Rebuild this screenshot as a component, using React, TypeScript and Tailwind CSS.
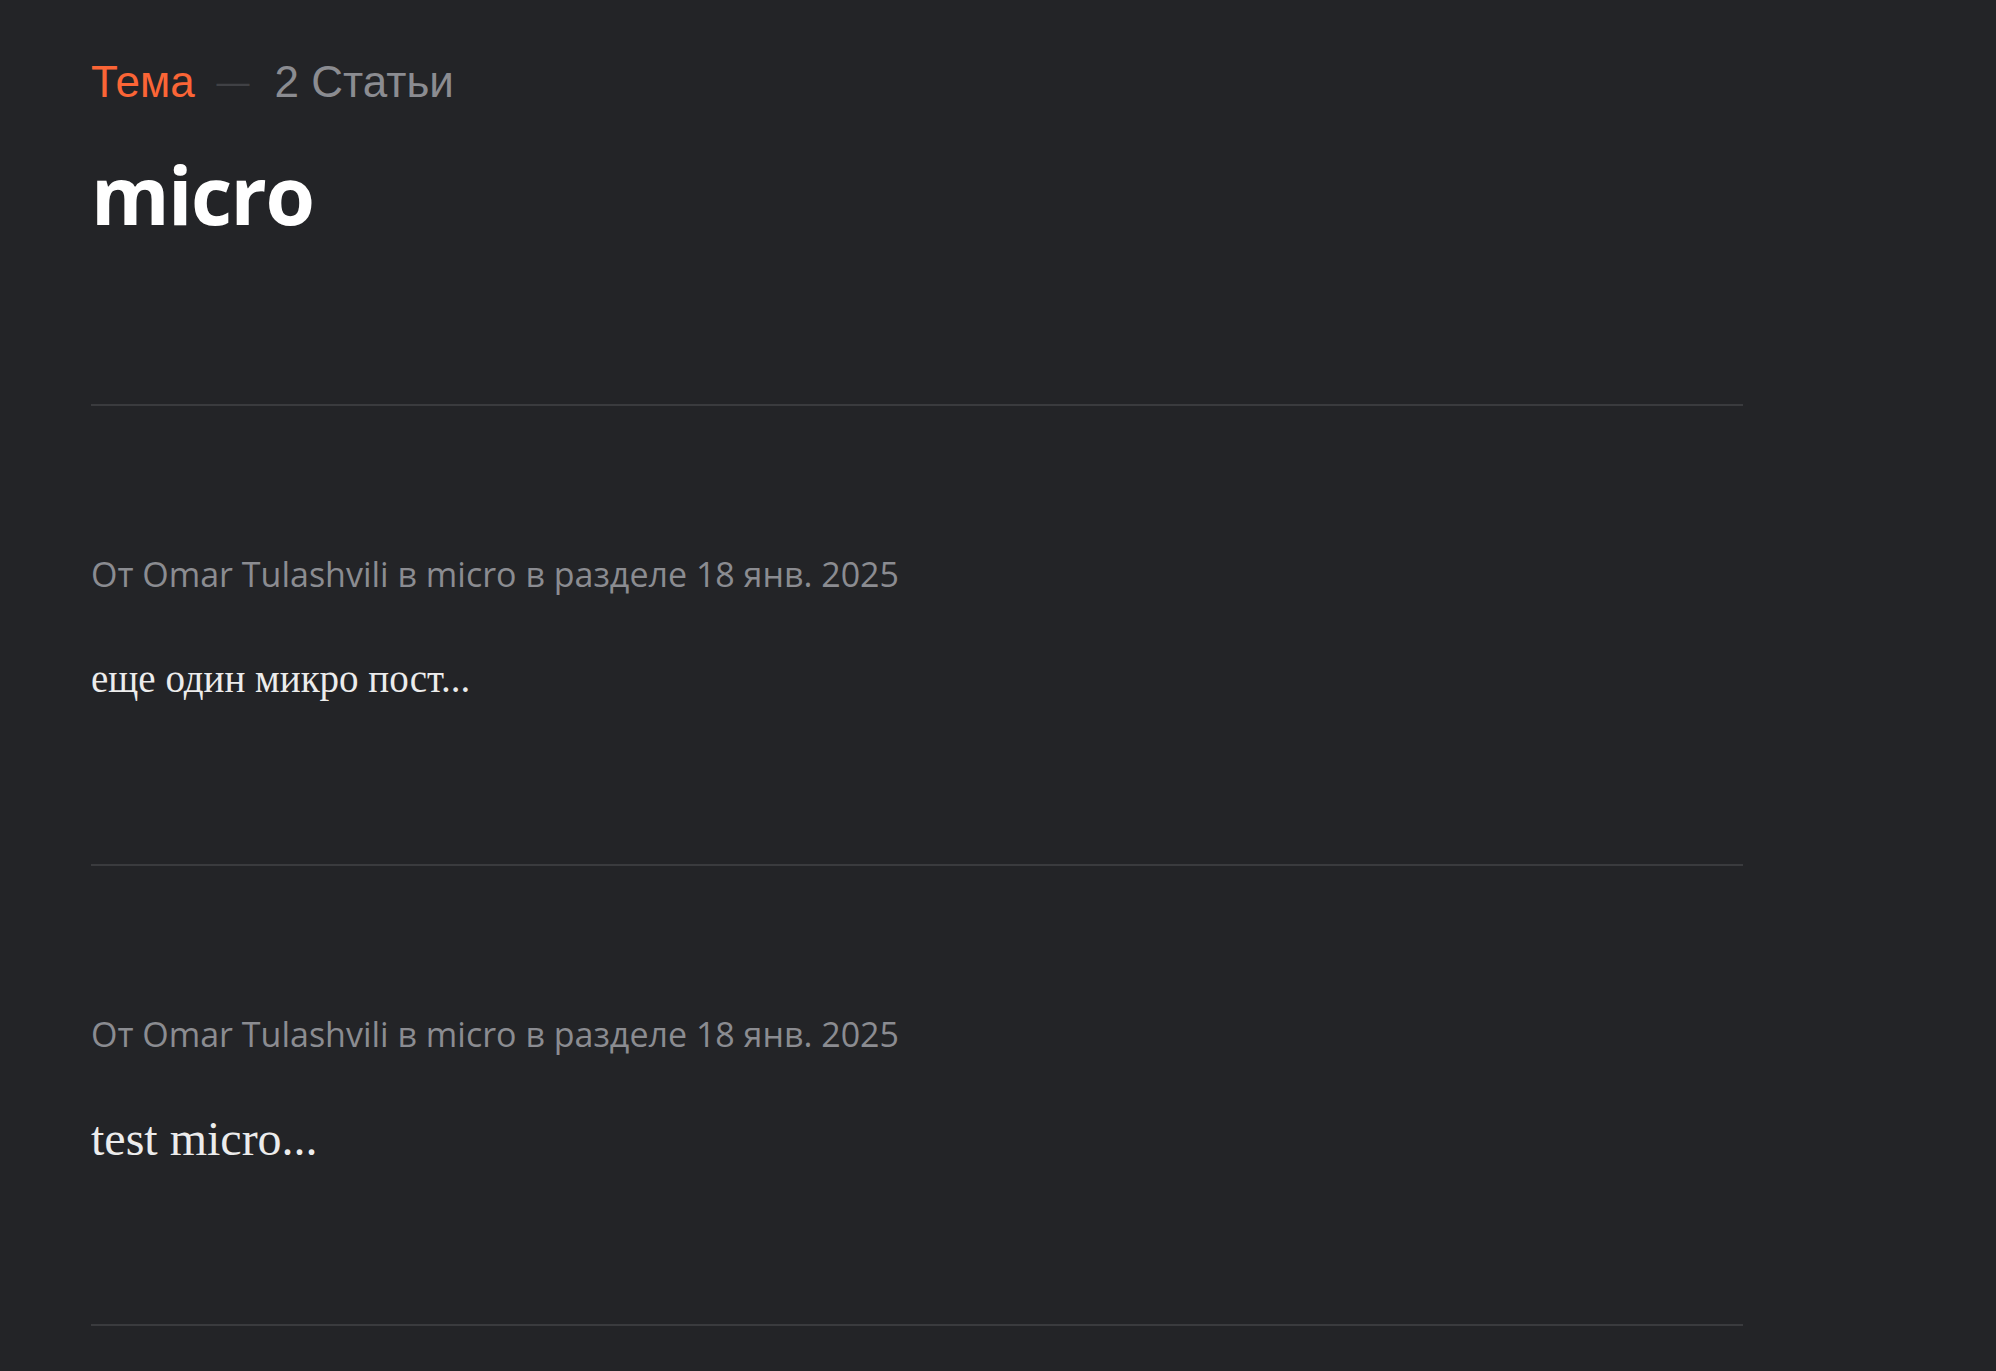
const posts = [
  { excerpt: "еще один микро пост...", size: "text-[39px]" },
  { excerpt: "test micro...", size: "text-[48px]" },
];

export default function App() {
  return (
    <div className="min-h-screen bg-[#232427] px-[91px]">
      <div className="w-[1652px]">
        {/* Header */}
        <header className="pt-[54px] pb-[155px]">
          <div className="flex items-center font-['Liberation_Sans',sans-serif] text-[44px] leading-[56px]">
            <span className="text-[#fb6536]">Тема</span>
            <span className="ml-[22px] mr-[25px] text-[33px] text-[#404145]">—</span>
            <span className="text-[#8b8c91]">2 Статьи</span>
          </div>
          <h1 className="mt-[29px] font-['Open_Sans',sans-serif] text-[80px] font-bold leading-[110px] tracking-[-1.5px] text-white">
            micro
          </h1>
        </header>

        {/* Posts */}
        <section className="border-t-2 border-[#3a3b3e]">
          {posts.map((post, i) => (
            <article key={i} className="border-b-2 border-[#3a3b3e] pt-[148px] pb-[160px]">
              <p className="font-['Open_Sans',sans-serif] text-[34px] leading-[40px] text-[#8b8c91]">
                От Omar Tulashvili в micro в разделе 18 янв. 2025
              </p>
              <p className={`mt-[60px] font-['Liberation_Serif',serif] leading-[50px] text-[#ececec] ${post.size}`}>
                {post.excerpt}
              </p>
            </article>
          ))}
        </section>
      </div>
    </div>
  );
}
